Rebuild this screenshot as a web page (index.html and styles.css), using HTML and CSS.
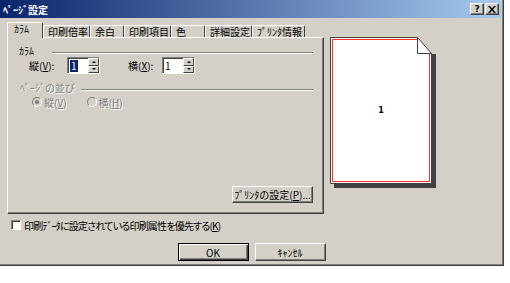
FILE: index.html
```html
<!DOCTYPE html>
<html lang="ja">
<head>
    <meta charset="UTF-8">
    <title>ページ設定</title>
    <link rel="stylesheet" href="styles.css">
</head>
<body>
    <div class="dialog">
        <div class="titlebar">
            <span class="title">ﾍﾟｰｼﾞ設定</span>
            <div class="caption-buttons">
                <span class="cap-btn">?</span>
                <span class="cap-btn">
                    <svg width="8" height="7" viewBox="0 0 8 7"><path d="M0 0h2l2 2.5L6 0h2L5 3.5 8 7H6L4 4.5 2 7H0l3-3.5z" fill="#000"/></svg>
                </span>
            </div>
        </div>

        <div class="main">
            <div class="sheet">
                <div class="tabs">
                    <div class="tab active t-col">ｶﾗﾑ</div>
                    <div class="tab t-wide">印刷倍率</div>
                    <div class="tab t-short">余白</div>
                    <div class="tab t-wide">印刷項目</div>
                    <div class="tab t-short">色</div>
                    <div class="tab t-wide">詳細設定</div>
                    <div class="tab t-info">ﾌﾟﾘﾝﾀ情報</div>
                </div>
                <div class="panel">
                    <div class="group-head">
                        <span>ｶﾗﾑ</span>
                        <span class="etch"></span>
                    </div>
                    <div class="spin-row">
                        <span class="spin-label first">縦(<u>V</u>):</span>
                        <div class="spin">
                            <span class="field"><span class="sel">1</span></span>
                            <span class="arrows">
                                <span class="arrow up"></span>
                                <span class="arrow down"></span>
                            </span>
                        </div>
                        <span class="spin-label second">横(<u>X</u>):</span>
                        <div class="spin">
                            <span class="field">1</span>
                            <span class="arrows">
                                <span class="arrow up"></span>
                                <span class="arrow down"></span>
                            </span>
                        </div>
                    </div>
                    <div class="group-head disabled order">
                        <span>ﾍﾟｰｼﾞの並び</span>
                        <span class="etch"></span>
                    </div>
                    <div class="radio-row disabled">
                        <span class="radio checked"></span><span class="radio-text">縦(<u>V</u>)</span>
                        <span class="radio second"></span><span class="radio-text">横(<u>H</u>)</span>
                    </div>
                    <div class="panel-foot">
                        <span class="btn printer">ﾌﾟﾘﾝﾀの設定(<u>P</u>)...</span>
                    </div>
                </div>
                <div class="check-row">
                    <span class="checkbox"></span>
                    <span class="check-text">印刷ﾃﾞｰﾀに設定されている印刷属性を優先する(<u>K</u>)</span>
                </div>
            </div>

            <div class="preview">
                <svg width="110" height="152" viewBox="0 0 110 152">
                    <rect x="4" y="17" width="102" height="134" fill="#404040"/>
                    <path d="M0.5 0.5H87.5L101.5 16.5V146.5H0.5Z" fill="#fff" stroke="#404040"/>
                    <path d="M87 2.5H2.5V144.5H99.5V17" fill="none" stroke="#ff3030"/>
                    <path d="M87.5 0.5V16.5H101.5" fill="none" stroke="#404040"/>
                    <text x="51" y="76" text-anchor="middle" class="page-num">1</text>
                </svg>
            </div>
        </div>

        <div class="footer">
            <span class="btn default">OK</span>
            <span class="btn">ｷｬﾝｾﾙ</span>
        </div>
    </div>
</body>
</html>
```

FILE: styles.css
```css
body {
    margin: 0;
    background: #fff;
    font-family: "Noto Sans CJK JP", sans-serif;
    font-size: 10px;
    color: #000;
}

.dialog {
    width: 504px;
    height: 266px;
    box-sizing: border-box;
    background: #d4d0c8;
    border-right: 1px solid #404040;
    border-bottom: 1px solid #404040;
    box-shadow: inset -1px -1px 0 #808080;
    display: flex;
    flex-direction: column;
}

.titlebar {
    height: 18px;
    margin-right: 2px;
    padding: 0 2px 0 3px;
    background: linear-gradient(to right, #0a246a, #a6caf0);
    color: #fff;
    font-weight: bold;
    display: flex;
    align-items: center;
    justify-content: space-between;
}

.caption-buttons {
    display: flex;
    gap: 1px;
}

.cap-btn {
    width: 14px;
    height: 12px;
    box-sizing: border-box;
    background: #d4d0c8;
    border: 1px solid;
    border-color: #fff #404040 #404040 #fff;
    box-shadow: inset -1px -1px 0 #808080;
    color: #000;
    font-family: "DejaVu Sans", sans-serif;
    font-size: 9px;
    line-height: 10px;
    display: flex;
    align-items: center;
    justify-content: center;
}

.main {
    display: flex;
    align-items: flex-start;
    gap: 6px;
    padding: 4px 0 0 7px;
}

.sheet {
    width: 317px;
}

/* tabs */
.tabs {
    display: flex;
    align-items: flex-end;
    height: 15px;
    position: relative;
    z-index: 1;
}

.tab {
    height: 12px;
    box-sizing: border-box;
    padding: 0 0 0 4px;
    border: 1px solid;
    border-color: #fff #404040 transparent #fff;
    border-bottom: none;
    border-radius: 2px 2px 0 0;
    line-height: 11px;
    white-space: nowrap;
}

.tab.active {
    height: 16px;
    margin-bottom: -1px;
    background: #d4d0c8;
    padding-left: 6px;
    line-height: 12px;
}

.t-col { width: 36px; }
.t-wide { width: 47px; }
.t-short { width: 34px; }
.t-info { width: 53px; }

.panel {
    height: 177px;
    box-sizing: border-box;
    border: 1px solid;
    border-color: #fff #404040 #404040 #fff;
    box-shadow: inset -1px -1px 0 #808080;
    padding: 7px 10px 10px 11px;
    display: flex;
    flex-direction: column;
}

.group-head {
    display: flex;
    align-items: center;
    height: 12px;
    line-height: 12px;
    gap: 18px;
}

.etch {
    flex: 1;
    height: 0;
    margin-top: 3px;
    border-top: 1px solid #808080;
    border-bottom: 1px solid #fff;
}

.group-head.order {
    margin-top: 8px;
    padding-left: 1px;
    gap: 6px;
}

.disabled {
    color: #808080;
    text-shadow: 1px 1px 0 #fff;
}

/* spinners */
.spin-row {
    display: flex;
    align-items: center;
    height: 17px;
}

.spin-label {
    white-space: nowrap;
}

.spin-label.first {
    margin-left: 10px;
    width: 38px;
}

.spin-label.second {
    margin-left: 28px;
    width: 34px;
}

.spin {
    display: flex;
    height: 17px;
    width: 33px;
    box-sizing: border-box;
    border: 1px solid;
    border-color: #808080 #fff #fff #808080;
    box-shadow: inset 1px 1px 0 #404040;
    background: #fff;
}

.field {
    flex: 1;
    padding: 2px 0 0 2px;
    line-height: 12px;
}

.sel {
    display: inline-block;
    background: #0a246a;
    color: #fff;
    padding: 0 1px;
}

.arrows {
    width: 11px;
    display: flex;
    flex-direction: column;
}

.arrow {
    flex: 1;
    background: #d4d0c8;
    border: 1px solid;
    border-color: #fff #404040 #404040 #fff;
    display: flex;
    align-items: center;
    justify-content: center;
}

.arrow::after {
    content: "";
    border-left: 2px solid transparent;
    border-right: 2px solid transparent;
}

.arrow.up::after {
    border-bottom: 2px solid #000;
}

.arrow.down::after {
    border-top: 2px solid #000;
}

/* radios */
.radio-row {
    display: flex;
    align-items: center;
    height: 12px;
    margin-top: 2px;
    padding-left: 13px;
}

.radio {
    width: 10px;
    height: 10px;
    box-sizing: border-box;
    border-radius: 50%;
    border: 1px solid;
    border-color: #808080 #fff #fff #808080;
    background: #d4d0c8;
    display: flex;
    align-items: center;
    justify-content: center;
    margin-right: 2px;
}

.radio.checked::after {
    content: "";
    width: 4px;
    height: 4px;
    border-radius: 50%;
    background: #808080;
}

.radio.second {
    margin-left: 20px;
}

/* buttons */
.btn {
    display: inline-flex;
    align-items: center;
    justify-content: center;
    box-sizing: border-box;
    height: 18px;
    background: #d4d0c8;
    border: 1px solid;
    border-color: #fff #404040 #404040 #fff;
    box-shadow: inset -1px -1px 0 #808080;
    white-space: nowrap;
}

.panel-foot {
    margin-top: auto;
    display: flex;
    justify-content: flex-end;
}

.btn.printer {
    width: 81px;
    height: 17px;
}

.check-row {
    display: flex;
    align-items: center;
    gap: 3px;
    margin-top: 5px;
    padding-left: 4px;
    height: 12px;
}

.check-text {
    font-feature-settings: "palt";
    letter-spacing: -0.8px;
    white-space: nowrap;
}

.checkbox {
    width: 10px;
    height: 10px;
    box-sizing: border-box;
    background: #fff;
    border: 1px solid;
    border-color: #808080 #fff #fff #808080;
    box-shadow: inset 1px 1px 0 #404040;
}

.footer {
    margin-top: auto;
    padding-bottom: 4px;
    display: flex;
    justify-content: center;
    gap: 6px;
}

.footer .btn {
    width: 71px;
}

.btn.default {
    border: 1px solid #000;
    box-shadow: inset 1px 1px 0 #fff, inset -1px -1px 0 #404040, inset -2px -2px 0 #808080;
}

.preview {
    margin-top: 15px;
    height: 152px;
}

.page-num {
    font-family: "DejaVu Sans", sans-serif;
    font-size: 8px;
    font-weight: bold;
}
```
